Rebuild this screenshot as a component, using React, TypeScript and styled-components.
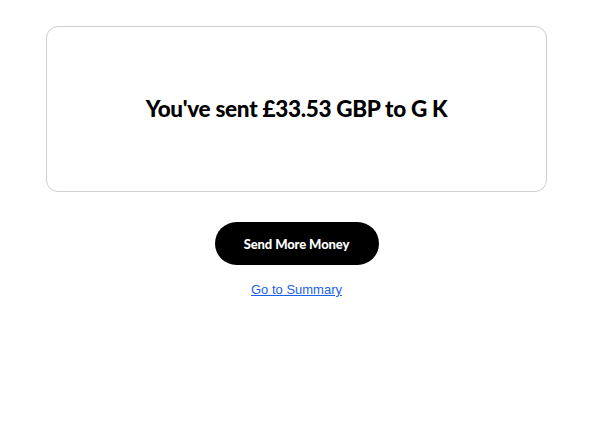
import React from "react";
import styled, { createGlobalStyle } from "styled-components";

const GlobalStyle = createGlobalStyle`
  html, body {
    margin: 0;
    padding: 0;
    background: #fff;
  }
  body {
    font-family: "Lato", "Liberation Sans", sans-serif;
    color: #000;
  }
`;

const Page = styled.main`
  display: flex;
  flex-direction: column;
  align-items: center;
  padding: 26px 50px 0 46px;
`;

const Card = styled.section`
  box-sizing: border-box;
  width: 100%;
  height: 166px;
  border: 1px solid #cfcfcf;
  border-radius: 12px;
  display: flex;
  align-items: center;
  justify-content: center;
`;

const Heading = styled.h1`
  margin: 0 0 2px;
  font-family: "Lato", sans-serif;
  font-weight: 900;
  font-size: 22.5px;
  letter-spacing: -0.3px;
`;

const Actions = styled.div`
  display: flex;
  flex-direction: column;
  align-items: center;
  margin-top: 30px;
`;

const PrimaryButton = styled.button`
  width: 164px;
  height: 43px;
  border: none;
  border-radius: 22px;
  background: #000;
  color: #fff;
  font-family: "Lato", sans-serif;
  font-weight: 900;
  font-size: 13px;
  letter-spacing: -0.1px;
  cursor: pointer;
`;

const TextLink = styled.a`
  margin-top: 17px;
  font-family: "Liberation Sans", Arial, sans-serif;
  font-size: 13px;
  color: #1a5fe6;
  text-decoration: underline;
  cursor: pointer;
`;

export default function App() {
  return (
    <>
      <GlobalStyle />
      <Page>
        <Card>
          <Heading>You've sent £33.53 GBP to G K</Heading>
        </Card>
        <Actions>
          <PrimaryButton>Send More Money</PrimaryButton>
          <TextLink href="#">Go to Summary</TextLink>
        </Actions>
      </Page>
    </>
  );
}
